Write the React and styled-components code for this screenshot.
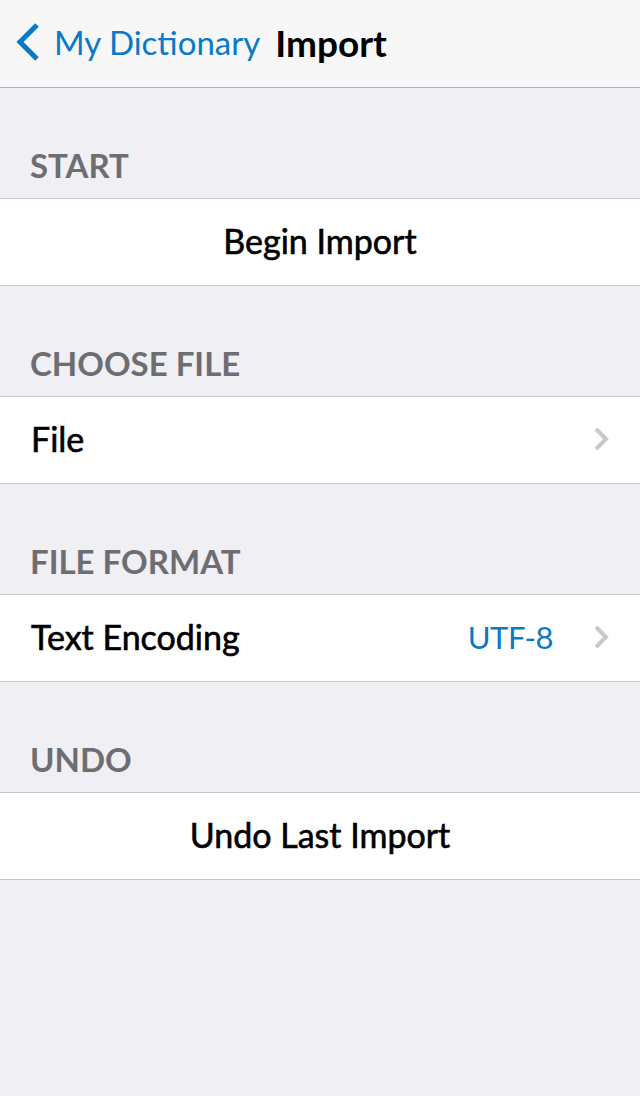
import React from "react";
import styled, { createGlobalStyle } from "styled-components";

const GlobalStyle = createGlobalStyle`
  html, body {
    margin: 0;
    padding: 0;
    background: #efeff4;
  }
  body {
    font-family: Lato, "Noto Sans", sans-serif;
    -webkit-font-smoothing: antialiased;
  }
`;

const Page = styled.div`
  width: 640px;
  min-height: 1096px;
  background: #efeff4;
`;

const NavBar = styled.div`
  height: 88px;
  box-sizing: border-box;
  background: #f7f7f7;
  border-bottom: 1px solid #b2b2b2;
  display: flex;
  align-items: center;
  padding: 0 0 3px 16px;
`;

const BackButton = styled.div`
  display: flex;
  align-items: center;
  color: #0a79c7;
  font-size: 33px;
  gap: 14px;
`;

const NavTitle = styled.div`
  margin-left: 15px;
  font-size: 37px;
  font-weight: 700;
  color: #000;
`;

const SectionHeader = styled.div`
  height: 110px;
  box-sizing: border-box;
  padding: 0 30px 13px;
  display: flex;
  align-items: flex-end;
  font-size: 33px;
  font-weight: 700;
  color: #6d6d72;
  text-transform: uppercase;
`;

const Cell = styled.div`
  height: 88px;
  box-sizing: border-box;
  background: #fff;
  border-top: 1px solid #c8c7cc;
  border-bottom: 1px solid #c8c7cc;
  display: flex;
  align-items: center;
  justify-content: ${(p) => (p.$center ? "center" : "space-between")};
  padding: 0 31px 3px 31px;
  font-size: 34px;
  color: #000;
  -webkit-text-stroke: 0.6px #000;
`;

const Detail = styled.div`
  display: flex;
  align-items: center;
  gap: 40px;
  color: #0a79c7;
  font-size: 31px;
  letter-spacing: -0.5px;
  -webkit-text-stroke: 0;
`;

const Chevron = () => (
  <svg width="16" height="24" viewBox="0 0 16 24">
    <path d="M3 2 L13 12 L3 22" fill="none" stroke="#c7c7cc" strokeWidth="4" />
  </svg>
);

const BackChevron = () => (
  <svg width="24" height="38" viewBox="0 0 24 38">
    <path d="M21 2 L4 19 L21 36" fill="none" stroke="#0a79c7" strokeWidth="5" />
  </svg>
);

export default function App() {
  return (
    <Page>
      <GlobalStyle />
      <NavBar>
        <BackButton>
          <BackChevron />
          My Dictionary
        </BackButton>
        <NavTitle>Import</NavTitle>
      </NavBar>

      <SectionHeader>Start</SectionHeader>
      <Cell $center>Begin Import</Cell>

      <SectionHeader>Choose File</SectionHeader>
      <Cell>
        File
        <Chevron />
      </Cell>

      <SectionHeader>File Format</SectionHeader>
      <Cell>
        Text Encoding
        <Detail>
          UTF-8
          <Chevron />
        </Detail>
      </Cell>

      <SectionHeader>Undo</SectionHeader>
      <Cell $center>Undo Last Import</Cell>
    </Page>
  );
}
